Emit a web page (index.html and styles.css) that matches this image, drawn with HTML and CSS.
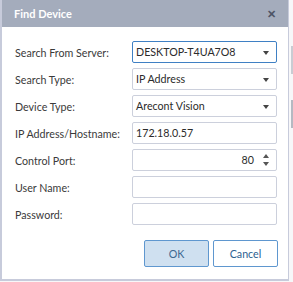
FILE: index.html
```html
<!DOCTYPE html>
<html lang="en">
<head>
  <meta charset="UTF-8" />
  <title>Find Device</title>
  <link rel="stylesheet" href="styles.css">
</head>
<body>
  <div class="backdrop">
    <div class="thumb thumb-top"></div>
    <div class="thumb thumb-mid"></div>
  </div>

  <div class="dialog">
    <div class="titlebar">
      <span class="title">Find Device</span>
      <span class="close">&#x2715;</span>
    </div>

    <form class="form">
      <label>Search From Server:</label>
      <div class="field select focused">DESKTOP-T4UA7O8<span class="caret"></span></div>

      <label>Search Type:</label>
      <div class="field select">IP Address<span class="caret"></span></div>

      <label>Device Type:</label>
      <div class="field select">Arecont Vision<span class="caret"></span></div>

      <label>IP Address/Hostname:</label>
      <div class="field">172.18.0.57</div>

      <label>Control Port:</label>
      <div class="field number">80
        <span class="spin"><span class="up"></span><span class="down"></span></span>
      </div>

      <label>User Name:</label>
      <div class="field"></div>

      <label>Password:</label>
      <div class="field"></div>
    </form>

    <div class="buttons">
      <button class="btn primary">OK</button>
      <button class="btn">Cancel</button>
    </div>
  </div>
</body>
</html>
```

FILE: styles.css
```css
body {
  margin: 0;
  width: 293px;
  height: 282px;
  background: #f7f7f9;
  font-family: Lato, "Noto Sans", sans-serif;
  position: relative;
  overflow: hidden;
}
.backdrop {
  position: absolute;
  top: 0;
  right: 0;
  width: 4px;
  height: 282px;
}
.thumb {
  position: absolute;
  right: 0;
  width: 2px;
  background: #c9ccd3;
}
.thumb-top {
  top: 46px;
  height: 28px;
}
.thumb-mid {
  top: 100px;
  height: 28px;
  background: #b5b9c2;
}
.dialog {
  position: relative;
  width: 286px;
  height: 279px;
  background: #fff;
  border: 1px solid #c7cbdb;
  border-top: none;
  border-left-width: 2px;
  border-bottom-width: 2px;
  box-sizing: content-box;
}
.titlebar {
  height: 27px;
  background: #a4acbc;
  display: flex;
  align-items: center;
  justify-content: space-between;
  padding: 0 12px 0 12px;
  color: #fff;
}
.title {
  font-weight: 700;
  font-size: 11px;
}
.close {
  color: #4e5566;
  font-size: 11px;
  font-weight: 700;
}
.form {
  display: grid;
  grid-template-columns: 117px 145px;
  grid-auto-rows: 22px;
  row-gap: 5px;
  padding: 14px 0 0 13px;
  margin: 0;
}
.form label {
  align-self: center;
  font-size: 10.7px;
  color: #3a3a3a;
  white-space: nowrap;
}
.field {
  position: relative;
  border: 1px solid #ccd0dc;
  border-radius: 2px;
  font-size: 10.7px;
  color: #2b2b2b;
  padding: 0 4px 0 3px;
  line-height: 20px;
}
.field.focused {
  border-color: #3f80c4;
}
.caret {
  position: absolute;
  right: 7px;
  top: 9px;
  border-left: 3px solid transparent;
  border-right: 3px solid transparent;
  border-top: 4px solid #444;
}
.number {
  text-align: right;
  padding-right: 22px;
}
.spin {
  position: absolute;
  right: 7px;
  top: 4px;
  display: flex;
  flex-direction: column;
  gap: 4px;
}
.up {
  border-left: 3px solid transparent;
  border-right: 3px solid transparent;
  border-bottom: 4px solid #555;
}
.down {
  border-left: 3px solid transparent;
  border-right: 3px solid transparent;
  border-top: 4px solid #555;
}
.buttons {
  display: flex;
  justify-content: flex-end;
  gap: 4px;
  padding: 15px 10px 0 0;
}
.btn {
  width: 65px;
  height: 27px;
  border: 1px solid #5f97cf;
  border-radius: 2px;
  background: #fff;
  color: #2d5f91;
  font-family: inherit;
  font-size: 10.7px;
  cursor: pointer;
}
.btn.primary {
  background: #cfe0f0;
  color: #3c6890;
}
```
